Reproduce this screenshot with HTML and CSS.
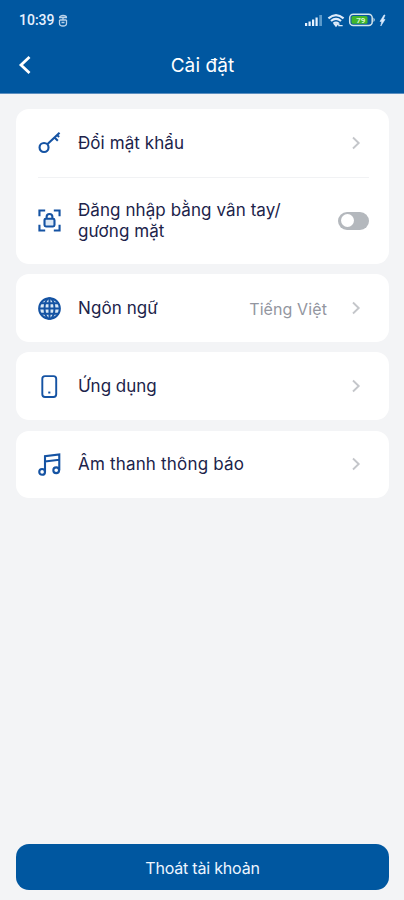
FILE: index.html
```
<!DOCTYPE html>
<html lang="vi">
<head>
<meta charset="utf-8">
<meta name="viewport" content="width=device-width, initial-scale=1">
<title>Cài đặt</title>
<link rel="stylesheet" href="styles.css">
</head>
<body>
<div class="screen">
  <header class="header">
    <div class="status">
      <span class="time">10:39</span>
      <svg class="badge" width="10" height="13" viewBox="0 0 10 13" fill="none" stroke="#b9d2ea" stroke-width="1.3"><path d="M1.5 3.5C1.5 .8 8.5 .8 8.500 3.500M1 3.500h8M1.500 6h7M1.500 6v3.500Q1.500 12 5 12T8.500 9.500V6M3.500 8.500h3M5 3.500V6"/></svg>
      <div class="indicators">
        <svg width="20" height="14" viewBox="0 0 20 14"><g fill="#e8f3ff"><rect x="1" y="10" width="2.200" height="3"/><rect x="4.500" y="8.500" width="2.200" height="4.500"/><rect x="8" y="6.500" width="2.200" height="6.500"/><rect x="11.500" y="4.500" width="2.200" height="8.500"/></g><rect x="15.300" y="2" width="2.700" height="11" fill="#5b9acb"/></svg>
        <svg width="18" height="15" viewBox="0 0 19 15" fill="none" stroke="#dfecfa" stroke-width="2.300"><path d="M1.500 5.200Q9.500-1.600 17.500 5.200M4.200 8Q9.500 3.600 14.800 8M6.800 10.700Q9.500 8.600 12.200 10.700"/><path d="M8 11.500l1.500 2 1.500-2zM12.500 10.500v2.500h4" stroke-width="1.300"/></svg>
        <svg width="28" height="14" viewBox="0 0 28 14"><rect x="1.700" y="1.200" width="22.500" height="11.200" rx="3.500" fill="#0758a0" stroke="#d4e5ec" stroke-width="1.500"/><rect x="3.500" y="3" width="16" height="7.700" rx="1.500" fill="#42b72b"/><path d="M25.500 4.500q2.500 2.300 0 4.600z" fill="#d4e5ec"/><text class="charge" x="12.800" y="10.200" text-anchor="middle">79</text></svg>
        <svg width="7" height="13" viewBox="0 0 7 13"><path d="M5 1L1 7.400h1.700L1.800 12 6 5.500H4.300L6 1z" fill="#dcecff" stroke="#dcecff" stroke-width=".6"/></svg>
      </div>
    </div>
    <div class="nav">
      <svg class="back" width="14" height="20" viewBox="0 0 14 20" fill="none" stroke="#fff" stroke-width="2.800"><path d="M11.500 2L3 10l8.500 8"/></svg>
      <h1 class="title">Cài đặt</h1>
    </div>
  </header>

  <main class="list">
    <section class="card">
      <div class="row">
        <svg class="icon" viewBox="0 0 24 24"><circle cx="6.300" cy="17.200" r="4.700"/><path d="M9.700 13.800L22.500 1.800M17.200 6.800l3.500 3.400M20 4.200l2 2"/></svg>
        <span class="label">Đổi mật khẩu</span>
        <svg class="chevron" viewBox="0 0 10 14"><path d="M2 1.500L7.700 7 2 12.500"/></svg>
      </div>
      <div class="row row-login">
        <svg class="icon" viewBox="0 0 24 24"><path d="M1.500 7.500v-6h6M16.500 1.500h6v6M22.500 16.500v6h-6M7.500 22.500h-6v-6"/><rect x="6.800" y="10.200" width="10.400" height="8" rx="1.500" fill="#dce8f5"/><path d="M9 10V8.200a3 3 0 0 1 6 0V10"/></svg>
        <span class="label">Đăng nhập bằng vân tay/<br>gương mặt</span>
        <span class="toggle"></span>
      </div>
    </section>
    <section class="card">
      <div class="row">
        <svg class="icon globe" viewBox="0 0 24 24"><circle cx="12" cy="12" r="10.800"/><ellipse cx="12" cy="12" rx="5.200" ry="10.800"/><path d="M12 1v22M1 12h22M3 6.500h18M3 17.500h18"/></svg>
        <span class="label">Ngôn ngữ</span>
        <span class="value">Tiếng Việt</span>
        <svg class="chevron" viewBox="0 0 10 14"><path d="M2 1.500L7.700 7 2 12.500"/></svg>
      </div>
    </section>
    <section class="card">
      <div class="row">
        <svg class="icon phone" viewBox="0 0 24 24"><rect x="4.500" y="1.200" width="14.500" height="21.800" rx="2.800"/><path d="M10.700 18.300h2.200"/></svg>
        <span class="label label-app">Ứng dụng</span>
        <svg class="chevron" viewBox="0 0 10 14"><path d="M2 1.500L7.700 7 2 12.500"/></svg>
      </div>
    </section>
    <section class="card">
      <div class="row">
        <svg class="icon" viewBox="0 0 24 24"><circle cx="4.300" cy="19.700" r="3"/><circle cx="19" cy="18" r="3"/><path d="M7.300 19.700V3.300L22.200 1.500V18M7.300 8.800L22.200 7"/></svg>
        <span class="label label-sound">Âm thanh thông báo</span>
        <svg class="chevron" viewBox="0 0 10 14"><path d="M2 1.500L7.700 7 2 12.500"/></svg>
      </div>
    </section>
  </main>

  <footer class="footer">
    <button class="logout" type="button">Thoát tài khoản</button>
  </footer>
</div>
</body>
</html>
```
FILE: styles.css
```
* { box-sizing: border-box; }

body {
  margin: 0;
  background: #f3f4f6;
  color: #20234a;
  font-family: Inter, "Noto Sans", sans-serif;
}

.screen {
  display: flex;
  flex-direction: column;
  height: 900px;
}

.header {
  height: 94px;
  background: #0057a0;
  border-bottom: 1px solid #5c8fc0;
  color: #fff;
}

.status {
  display: flex;
  align-items: center;
  height: 40px;
  padding: 0 18px 0 19px;
}

.time {
  width: 36px;
  font: 500 14px/20px Roboto, sans-serif;
  color: #e6f1ff;
}

.badge { margin-left: 3px; }

.indicators {
  display: flex;
  align-items: center;
  gap: 3px;
  margin-left: auto;
}

.charge {
  fill: #d9f5c9;
  font: 700 8px Roboto, sans-serif;
}

.nav {
  display: grid;
  grid-template-columns: 40px 1fr 40px;
  align-items: center;
  height: 50px;
}

.back { margin-left: 18px; }

.title {
  margin: 0;
  padding: 2px 0 0 1px;
  font-size: 19px;
  font-weight: 400;
  line-height: 26px;
  letter-spacing: 0.1px;
  text-align: center;
}

.list {
  display: flex;
  flex-direction: column;
  gap: 10.500px;
  padding: 15px 15px 0 16px;
}

.card {
  background: #fff;
  border-radius: 13px;
  padding: 0 20px 0 22px;
}

.row {
  display: flex;
  align-items: center;
  height: 67.700px;
}

.row-login {
  height: 87px;
  border-top: 1px solid #f1f2f4;
}

.icon {
  flex: none;
  width: 23px;
  height: 23px;
  margin-right: 17px;
  fill: none;
  stroke: #1553a3;
  stroke-width: 2.200;
}

.globe {
  fill: #dbe9f5;
  stroke-width: 2.100;
}

.phone { stroke-width: 2; }

.label {
  flex: 1;
  padding-top: 1px;
  font-size: 17px;
  font-weight: 400;
  line-height: 21px;
  letter-spacing: 0.080px;
  white-space: nowrap;
}

.label-app { letter-spacing: 0; }

.label-sound { letter-spacing: 0.180px; }

.value {
  margin-right: 24px;
  padding-top: 2px;
  color: #93969f;
  font-size: 16px;
  letter-spacing: 0.100px;
}

.chevron {
  flex: none;
  width: 10px;
  height: 14px;
  margin-right: 8px;
  fill: none;
  stroke: #c4c6ca;
  stroke-width: 1.900;
}

.toggle {
  display: flex;
  align-items: center;
  width: 31px;
  height: 18px;
  padding: 2.500px;
  border-radius: 9px;
  background: #b4b8bd;
}

.toggle::before {
  content: "";
  width: 13px;
  height: 13px;
  border-radius: 50%;
  background: #fff;
}

.footer {
  margin-top: auto;
  padding: 0 15px 10px 16px;
}

.logout {
  display: block;
  width: 100%;
  height: 46px;
  border: 0;
  border-radius: 13px;
  background: #0057a0;
  color: #edf5ff;
  font-family: inherit;
  font-size: 16px;
  letter-spacing: -0.200px;
  padding-top: 3px;
}
```
